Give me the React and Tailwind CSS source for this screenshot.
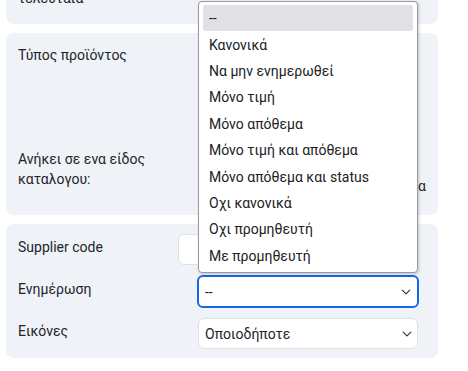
import React from "react";

const Chevron = () => (
  <svg width="10" height="10" viewBox="0 0 16 16" className="shrink-0">
    <path
      d="M2 5l6 6 6-6"
      fill="none"
      stroke="#343a40"
      strokeWidth="2"
      strokeLinecap="round"
      strokeLinejoin="round"
    />
  </svg>
);

const options = [
  "--",
  "Κανονικά",
  "Να μην ενημερωθεί",
  "Μόνο τιμή",
  "Μόνο απόθεμα",
  "Μόνο τιμή και απόθεμα",
  "Μόνο απόθεμα και status",
  "Οχι κανονικά",
  "Οχι προμηθευτή",
  "Με προμηθευτή",
];

export default function App() {
  return (
    <div className="relative h-[371px] w-[468px] overflow-hidden bg-white font-['Roboto',sans-serif] text-[14px] leading-[20px] text-[#212529]">
      <div className="flex w-[438px] flex-col gap-[9px] pl-[6px]">
        {/* Κάρτα 1 (κομμένη) */}
        <div className="mt-[-30px] rounded-lg bg-[#eff2f7] px-3 pt-[18px] pb-[15px]">
          <div className="leading-[21px]">τελευταία</div>
        </div>

        {/* Κάρτα 2 */}
        <div className="flex flex-col rounded-lg bg-[#eff2f7] px-3 pt-[12px] pb-[19px]">
          <div className="flex h-[104px]">
            <div className="w-[160px]">Τύπος προϊόντος</div>
            <div className="flex-1" />
          </div>
          <div className="flex">
            <div className="w-[160px]">Ανήκει σε ενα είδος καταλογου:</div>
            <div className="flex flex-1 justify-end pt-[27px]">
              Χωρίς κατηγορία
            </div>
          </div>
        </div>

        {/* Κάρτα 3 */}
        <div className="flex flex-col gap-[11px] rounded-lg bg-[#eff2f7] px-3 pt-[10px] pb-[9px]">
          <div className="flex h-[31px] items-start">
            <div className="w-[160px] pt-[3px]">Supplier code</div>
            <div className="h-[31px] w-[230px] rounded-md border border-[#dee2e6] bg-white" />
          </div>
          <div className="flex h-[31px] items-start">
            <div className="w-[180px] pt-[3px]">Ενημέρωση</div>
            <div className="-mt-px -ml-px flex h-[33px] w-[222px] items-center justify-between rounded-md border-2 border-[#1766e3] bg-white pr-[6px] pl-[6px]">
              <span>--</span>
              <Chevron />
            </div>
          </div>
          <div className="flex h-[31px] items-start">
            <div className="w-[180px] pt-[3px]">Εικόνες</div>
            <div className="flex h-[31px] w-[220px] items-center justify-between rounded-md border border-[#dee2e6] bg-white pr-[5px] pl-[6px]">
              <span>Οποιοδήποτε</span>
              <Chevron />
            </div>
          </div>
        </div>
      </div>

      {/* Ανοιχτή λίστα επιλογών */}
      <div className="absolute top-[1px] left-[198px] h-[272px] w-[220px] rounded-[4px] border border-[#9a9aa2] bg-white px-[4px] pt-[3px] text-[#202124] shadow-[1px_1px_3px_rgba(0,0,0,0.2)]">
        {options.map((o, i) => (
          <div
            key={o}
            className={`flex h-[26.4px] items-center rounded-[3px] pl-[6px] ${
              i === 0 ? "bg-[#e0e0e6]" : ""
            }`}
          >
            {o}
          </div>
        ))}
      </div>
    </div>
  );
}
